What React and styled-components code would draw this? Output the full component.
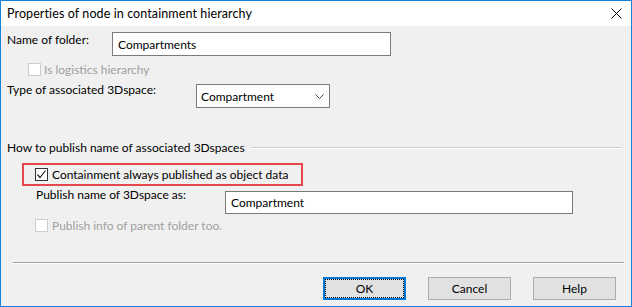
import React from 'react';
import styled, { createGlobalStyle } from 'styled-components';

const FONT = `"Segoe UI", Lato, "Liberation Sans", sans-serif`;

const GlobalStyle = createGlobalStyle`
  html, body {
    margin: 0;
    padding: 0;
    background: #ffffff;
  }
  body {
    font-family: ${FONT};
    font-size: 12px;
    color: #000000;
  }
  * {
    box-sizing: border-box;
  }
`;

const Window = styled.div`
  width: 632px;
  height: 307px;
  border: 1px solid #1883d7;
  background: #f0f0f0;
  display: flex;
  flex-direction: column;
`;

const TitleBar = styled.div`
  height: 25px;
  background: #ffffff;
  display: flex;
  align-items: center;
  justify-content: space-between;
  padding: 0 9px 0 6px;
`;

const Title = styled.span`
  font-size: 12.5px;
  letter-spacing: 0.1px;
  line-height: 16px;
`;

const Form = styled.div`
  flex: 1;
  display: flex;
  flex-direction: column;
  padding: 6px 0 0 6px;
`;

const FieldRow = styled.div`
  display: flex;
  align-items: flex-start;
  margin: ${(p) => p.$margin || '0'};
`;

const Label = styled.span`
  width: ${(p) => p.$width}px;
  flex-shrink: 0;
  line-height: 16px;
  margin-top: ${(p) => p.$offset || 0}px;
  color: ${(p) => (p.$disabled ? '#a0a0a0' : '#000000')};
`;

const TextBox = styled.div`
  width: ${(p) => p.$width}px;
  height: ${(p) => p.$height}px;
  border: 1px solid #7a7a7a;
  background: #ffffff;
  padding-left: 5px;
  display: flex;
  align-items: center;
  margin-top: ${(p) => p.$offset || 0}px;
`;

const Select = styled.div`
  width: 134px;
  height: 24px;
  margin-top: 2px;
  border: 1px solid #7a7a7a;
  background: #ffffff;
  padding: 0 5px 0 4px;
  display: flex;
  align-items: center;
  justify-content: space-between;
`;

const CheckRow = styled.label`
  display: flex;
  align-items: center;
  height: 13px;
  margin: ${(p) => p.$margin || '0'};
`;

const Box = styled.span`
  width: 13px;
  height: 13px;
  flex-shrink: 0;
  border: 1px solid ${(p) => (p.$disabled ? '#cccccc' : '#333333')};
  background: #ffffff;
  display: flex;
  align-items: center;
  justify-content: center;
  margin-right: ${(p) => p.$gap}px;
`;

const CheckText = styled.span`
  line-height: 16px;
  color: ${(p) => (p.$disabled ? '#a0a0a0' : '#000000')};
`;

const GroupHeading = styled.div`
  display: flex;
  align-items: center;
  margin: 32px 9px 0 0;
  line-height: 16px;
`;

const GroupRule = styled.div`
  flex: 1;
  margin-left: 6px;
  height: 2px;
  border-top: 1px solid #d0d0d0;
  border-bottom: 1px solid #ffffff;
`;

const Highlight = styled.div`
  width: 281px;
  height: 23px;
  margin: 7px 0 0 15px;
  border: 2px solid #e5474c;
  padding: 0 0 0 11px;
  display: flex;
  align-items: center;
`;

const Separator = styled.div`
  height: 2px;
  margin: 30px 7px 0 6px;
  border-top: 1px solid #a0a0a0;
  border-bottom: 1px solid #ffffff;
`;

const ButtonBar = styled.div`
  display: flex;
  justify-content: flex-end;
  gap: 22px;
  margin: 13px 15px 0 0;
`;

const Button = styled.button`
  width: 83px;
  height: 23px;
  padding: 0;
  font-family: ${FONT};
  font-size: 12px;
  color: #000000;
  background: #e1e1e1;
  border: ${(p) => (p.$default ? '2px solid #0078d7' : '1px solid #adadad')};
  display: flex;
  align-items: center;
  justify-content: center;
`;

const FocusRing = styled.span`
  flex: 1;
  align-self: stretch;
  display: flex;
  align-items: center;
  justify-content: center;
  border: 1px dotted #000000;
`;

const CloseIcon = () => (
  <svg width="11" height="11" viewBox="0 0 11 11">
    <path d="M0.5 0.5 L10.5 10.5 M10.5 0.5 L0.5 10.5" stroke="#000" strokeWidth="1" />
  </svg>
);

const Chevron = () => (
  <svg width="9" height="5" viewBox="0 0 9 5">
    <path d="M0.5 0.5 L4.5 4.5 L8.5 0.5" stroke="#444" strokeWidth="1" fill="none" />
  </svg>
);

const Tick = () => (
  <svg width="11" height="11" viewBox="0 0 11 11">
    <path d="M1.5 5.5 L4 8.5 L9.5 1.5" stroke="#222" strokeWidth="1.2" fill="none" />
  </svg>
);

const App = () => (
  <>
    <GlobalStyle />
    <Window>
      <TitleBar>
        <Title>Properties of node in containment hierarchy</Title>
        <CloseIcon />
      </TitleBar>
      <Form>
        <FieldRow>
          <Label $width={105}>Name of folder:</Label>
          <TextBox $width={279} $height={24}>Compartments</TextBox>
        </FieldRow>
        <CheckRow $margin="7px 0 0 21px">
          <Box $disabled $gap={3} />
          <CheckText $disabled>Is logistics hierarchy</CheckText>
        </CheckRow>
        <FieldRow $margin="6px 0 0 0">
          <Label $width={189}>Type of associated 3Dspace:</Label>
          <Select>
            <span>Compartment</span>
            <Chevron />
          </Select>
        </FieldRow>
        <GroupHeading>
          <span>How to publish name of associated 3Dspaces</span>
          <GroupRule />
        </GroupHeading>
        <Highlight>
          <Box $gap={4}>
            <Tick />
          </Box>
          <CheckText>Containment always published as object data</CheckText>
        </Highlight>
        <FieldRow $margin="1px 0 0 29px">
          <Label $width={189}>Publish name of 3Dspace as:</Label>
          <TextBox $width={348} $height={23} $offset={4}>Compartment</TextBox>
        </FieldRow>
        <CheckRow $margin="5px 0 0 28px">
          <Box $disabled $gap={4} />
          <CheckText $disabled>Publish info of parent folder too.</CheckText>
        </CheckRow>
        <Separator />
        <ButtonBar>
          <Button $default>
            <FocusRing>OK</FocusRing>
          </Button>
          <Button>Cancel</Button>
          <Button>Help</Button>
        </ButtonBar>
      </Form>
    </Window>
  </>
);

export default App;
